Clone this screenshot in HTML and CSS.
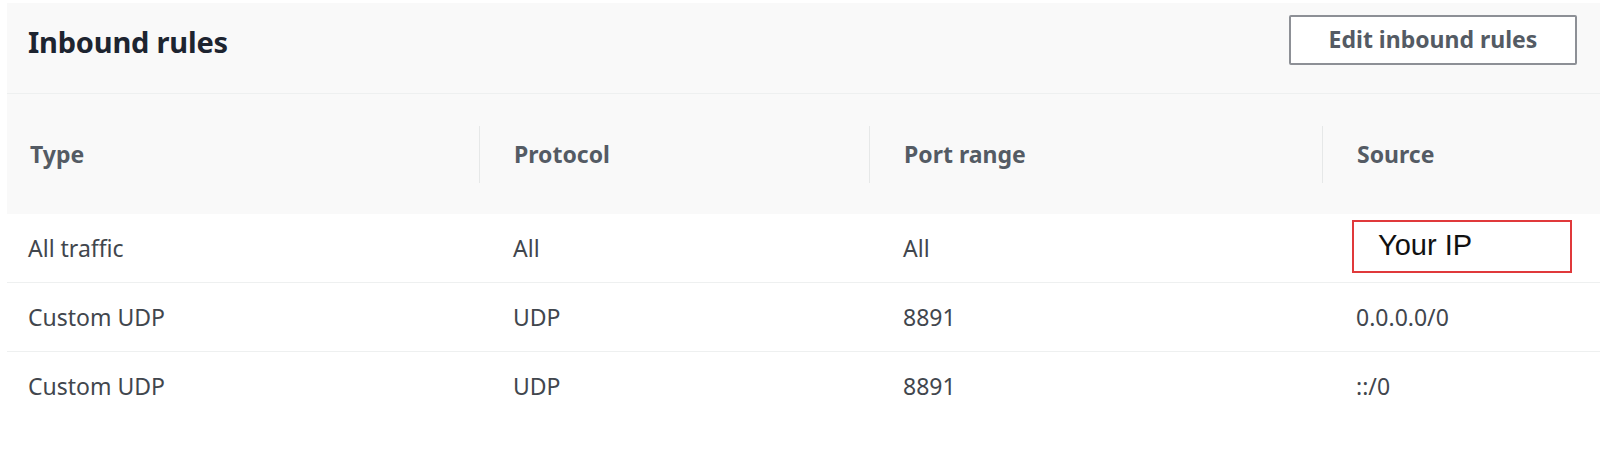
FILE: index.html
```html
<!DOCTYPE html>
<html>
<head>
<meta charset="utf-8">
<link rel="stylesheet" href="styles.css">
</head>
<body>
<div class="panel">
  <div class="panel-head">
    <h2 class="title">Inbound rules</h2>
    <button class="btn">Edit inbound rules</button>
  </div>
  <div class="table">
    <div class="thead">
      <div class="th first">Type</div>
      <div class="th">Protocol</div>
      <div class="th">Port range</div>
      <div class="th">Source</div>
    </div>
    <div class="row">
      <div class="td first">All traffic</div>
      <div class="td">All</div>
      <div class="td">All</div>
      <div class="td"><span class="mark">Your IP</span></div>
    </div>
    <div class="row">
      <div class="td first">Custom UDP</div>
      <div class="td">UDP</div>
      <div class="td">8891</div>
      <div class="td">0.0.0.0/0</div>
    </div>
    <div class="row last">
      <div class="td first">Custom UDP</div>
      <div class="td">UDP</div>
      <div class="td">8891</div>
      <div class="td">::/0</div>
    </div>
  </div>
</div>
</body>
</html>
```

FILE: styles.css
```css
html, body {
  margin: 0;
  padding: 0;
  background: #ffffff;
  overflow: hidden;
}
body {
  font-family: "Noto Sans", "Open Sans", sans-serif;
  color: #16191f;
}
.panel {
  margin: 3px 0 0 7px;
  width: 1610px;
}
.panel-head {
  background: #f9f9f9;
  height: 90px;
  display: flex;
  align-items: center;
  justify-content: space-between;
  padding: 0 40px 0 21px;
  border-bottom: 1px solid #eef0f0;
}
.title {
  margin: 0;
  font-size: 29px;
  font-weight: 700;
  color: #1d2430;
  letter-spacing: -0.2px;
  position: relative;
  top: -7px;
}
.btn {
  font-family: inherit;
  font-size: 23px;
  font-weight: 700;
  color: #545b64;
  background: #ffffff;
  border: 2px solid #8d9096;
  border-radius: 2px;
  width: 288px;
  height: 50px;
  padding: 0 0 2px 0;
  position: relative;
  top: -8px;
}
.thead {
  display: grid;
  grid-template-columns: 472px 390px 453px 1fr;
  background: #f9f9f9;
  height: 120px;
  align-items: center;
}
.th {
  font-size: 23px;
  font-weight: 700;
  color: #545b64;
  padding-left: 34px;
  border-left: 1px solid #e6e8e8;
  height: 57px;
  display: flex;
  align-items: center;
}
.th.first {
  border-left: none;
  padding-left: 23px;
}
.row {
  display: grid;
  grid-template-columns: 472px 390px 453px 1fr;
  height: 68px;
  align-items: center;
  border-bottom: 1px solid #eef0f0;
}
.row.last {
  border-bottom: none;
}
.td {
  font-size: 23px;
  color: #41464d;
  padding-left: 34px;
}
.td.first {
  padding-left: 21px;
}
.mark {
  display: inline-block;
  margin-left: -4px;
  width: 220px;
  height: 53px;
  box-sizing: border-box;
  border: 2px solid #e0393b;
  padding-left: 24px;
  font-family: "Liberation Sans", Arial, sans-serif;
  font-size: 29px;
  line-height: 47px;
  color: #111;
  position: relative;
  top: -2px;
}
```
